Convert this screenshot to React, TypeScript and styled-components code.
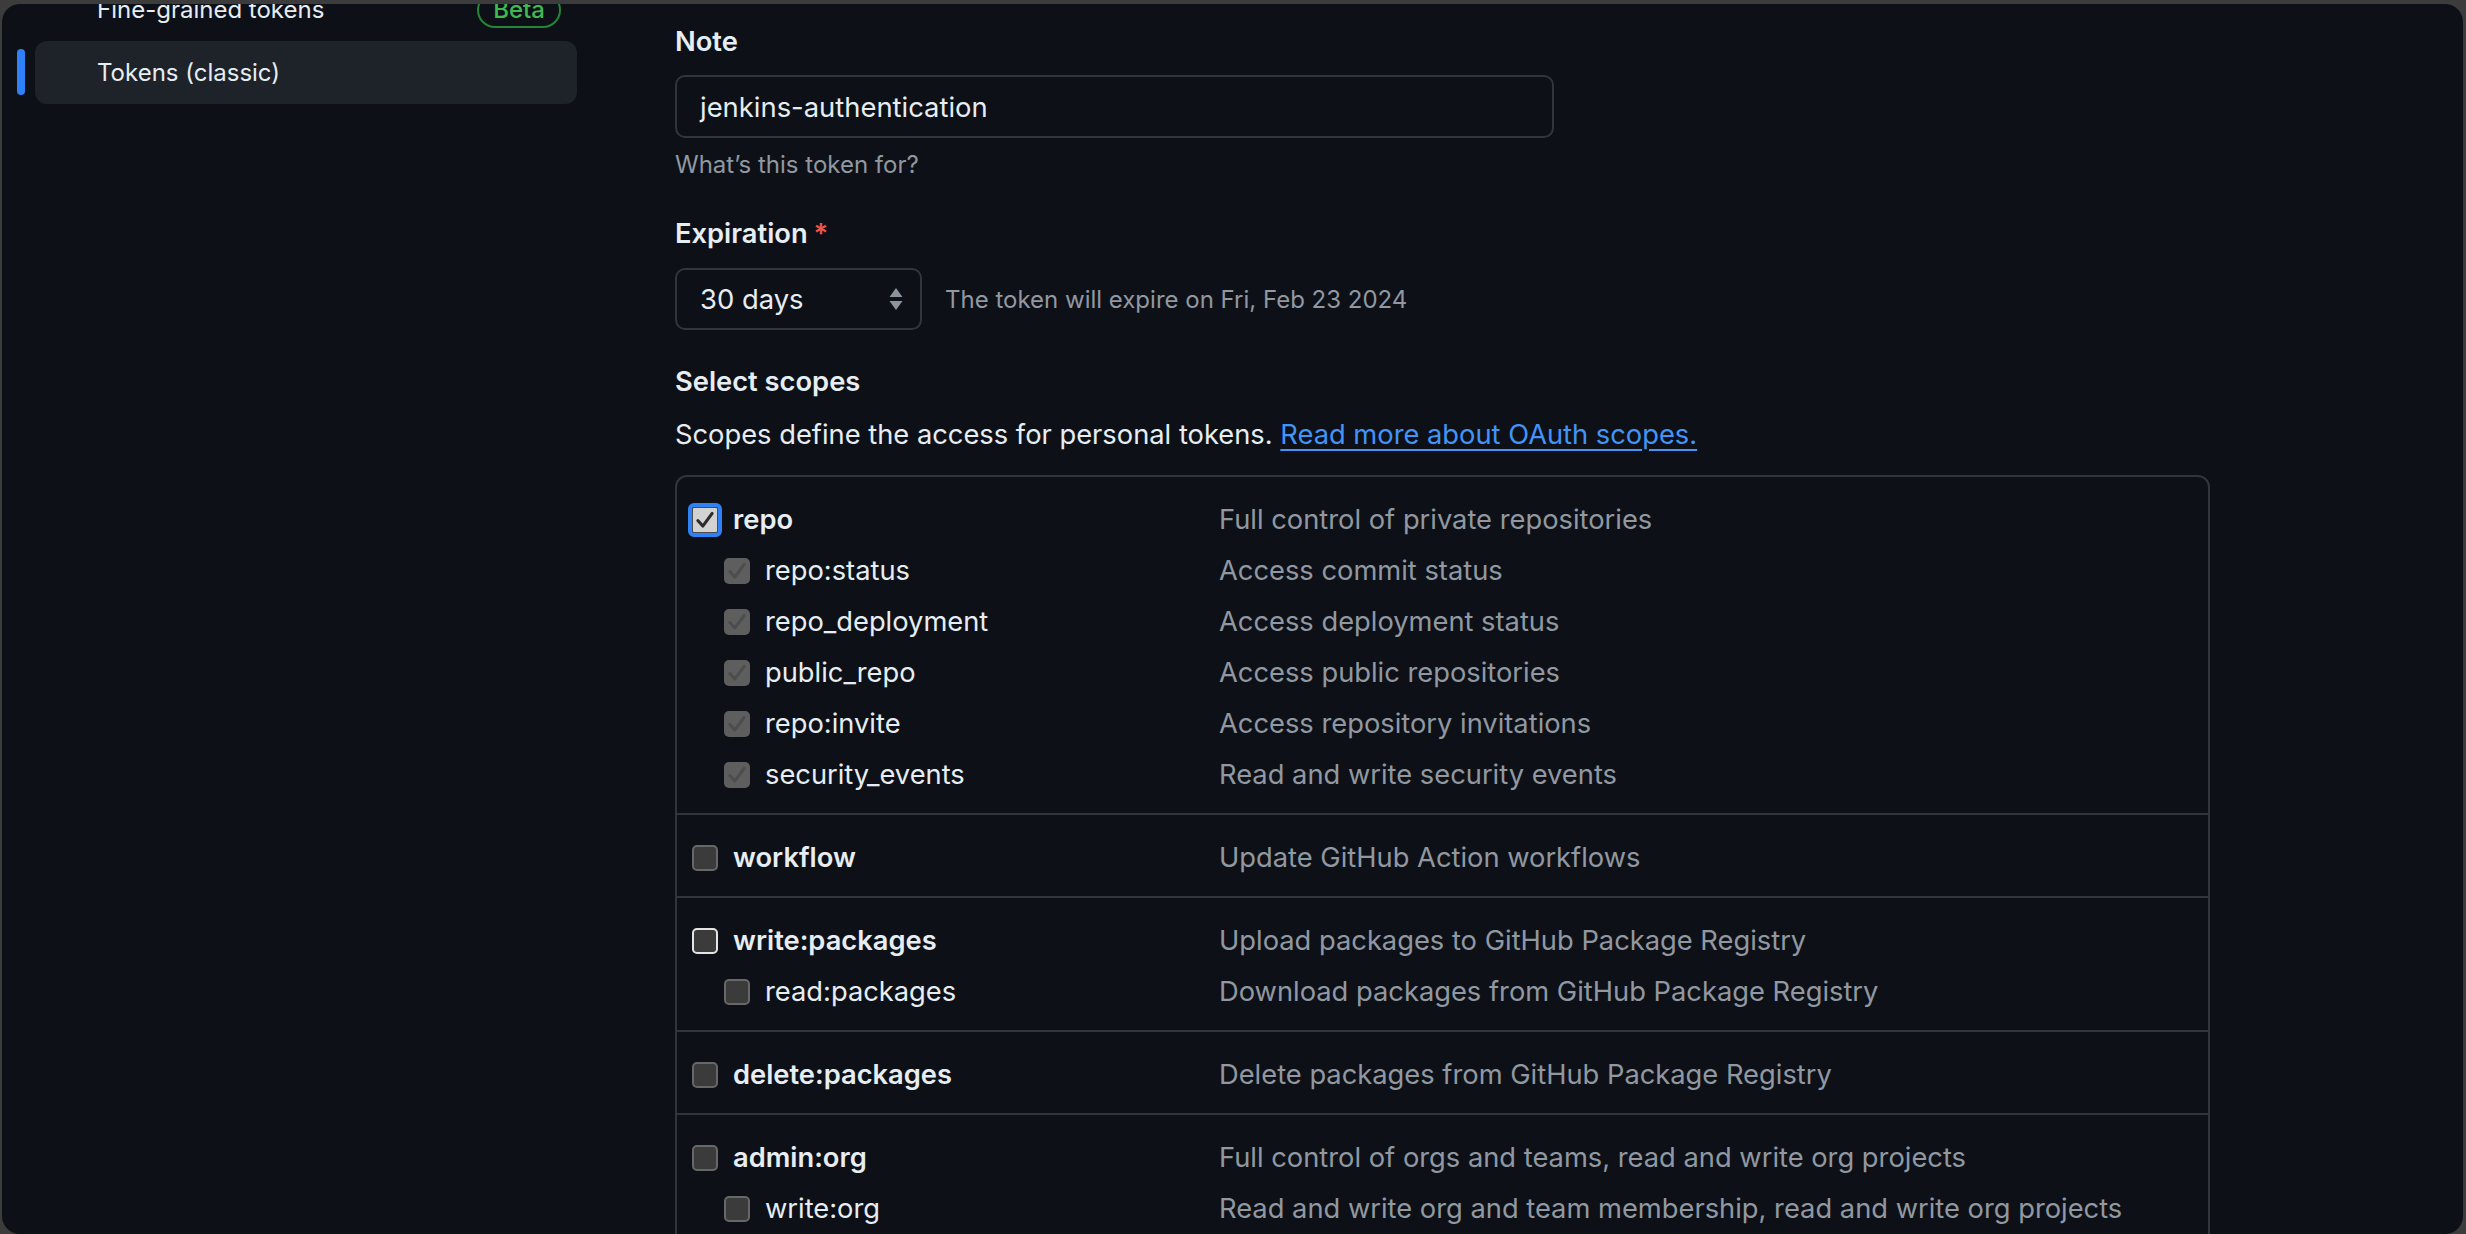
import React from "react";
import styled, { createGlobalStyle, css } from "styled-components";

const Global = createGlobalStyle`
  html, body { margin: 0; padding: 0; height: 100%; background: #3c3c3c; overflow: hidden; }
  #root { height: 100%; }
  *, *::before, *::after { box-sizing: border-box; }
`;

const FONT = `Inter, "Noto Sans", "Liberation Sans", sans-serif`;
const FG = "#e6edf3";
const MUTED = "#9198a1";
const BORDER = "#30363d";
const BODY = "27.3px";

const Window = styled.div`
  height: calc(100vh - 4px);
  margin: 4px 3px 0 2px;
  border-radius: 18px;
  background: #0d1117;
  overflow: hidden;
  display: flex;
  font-family: ${FONT};
  color: ${FG};
`;

const Sidebar = styled.nav`
  width: 673px;
  flex-shrink: 0;
  padding-left: 33px;
`;

const NavList = styled.ul`
  list-style: none;
  margin: -26px 0 0;
  padding: 0;
  width: 542px;
  display: flex;
  flex-direction: column;
`;

const NavItem = styled.li<{ $active?: boolean }>`
  position: relative;
  height: 63px;
  display: flex;
  align-items: center;
  justify-content: space-between;
  padding: 0 16px 0 62px;
  border-radius: 12px;
  font-size: 24px;
  color: ${FG};
  ${(p) =>
    p.$active &&
    css`
      background: #1e2329;
      &::before {
        content: "";
        position: absolute;
        left: -18px;
        top: 8px;
        width: 8px;
        height: 46px;
        border-radius: 6px;
        background: #2f81f7;
      }
    `}
`;

const BetaBadge = styled.span`
  display: inline-flex;
  align-items: center;
  height: 36px;
  padding: 0 14px;
  border: 2px solid #238636;
  border-radius: 999px;
  color: #3fb950;
  font-size: 24px;
  font-weight: 500;
`;

const Main = styled.main`
  flex: 1;
  padding-top: 17px;
  display: flex;
  flex-direction: column;
  align-items: flex-start;
  & > * {
    flex-shrink: 0;
  }
`;

const Label = styled.div<{ $mt?: number }>`
  font-size: ${BODY};
  font-weight: 600;
  line-height: 42px;
  margin-top: ${(p) => p.$mt ?? 0}px;
`;

const Required = styled.span`
  color: #f85149;
  margin-left: 6px;
`;

const TextInput = styled.div`
  margin-top: 12px;
  width: 879px;
  height: 63px;
  border: 2px solid ${BORDER};
  border-radius: 10px;
  padding: 0 23px;
  display: flex;
  align-items: center;
  font-size: 27.4px;
`;

const Hint = styled.div`
  margin-top: 9px;
  font-size: 24px;
  line-height: 36px;
  color: ${MUTED};
`;

const SelectRow = styled.div`
  margin-top: 13px;
  display: flex;
  align-items: center;
  gap: 23px;
`;

const Select = styled.div`
  width: 247px;
  height: 62px;
  border: 2px solid ${BORDER};
  border-radius: 10px;
  padding: 0 17px 0 23px;
  display: flex;
  align-items: center;
  justify-content: space-between;
  font-size: 27.4px;
`;

const ExpireNote = styled.span`
  font-size: 24px;
  color: ${MUTED};
`;

const Paragraph = styled.p`
  margin: 11px 0 0;
  font-size: ${BODY};
  line-height: 42px;
`;

const Link = styled.a`
  color: #4493f8;
  text-decoration: underline;
  text-underline-offset: 5px;
  text-decoration-thickness: 2px;
`;

const ScopeTable = styled.div`
  margin-top: 19px;
  width: 1535px;
  border: 2px solid ${BORDER};
  border-radius: 12px;
`;

const Section = styled.div`
  padding: 17px 0 13px 15px;
  & + & {
    border-top: 2px solid ${BORDER};
  }
`;

const Row = styled.div`
  display: grid;
  grid-template-columns: 527px 1fr;
  align-items: center;
  height: 51px;
  font-size: ${BODY};
`;

const LabelCell = styled.label<{ $child?: boolean }>`
  display: flex;
  align-items: center;
  gap: 15px;
  padding-left: ${(p) => (p.$child ? 32 : 0)}px;
  font-weight: ${(p) => (p.$child ? 400 : 600)};
  color: ${FG};
`;

const Desc = styled.span`
  color: ${MUTED};
`;

type BoxState = "focused" | "disabled" | "off" | "hover";

const Box = styled.span<{ $state: BoxState }>`
  width: 26px;
  height: 26px;
  flex-shrink: 0;
  display: inline-flex;
  align-items: center;
  justify-content: center;
  border-radius: 5px;
  ${(p) =>
    p.$state === "focused"
      ? css`
          background: #d2d2d2;
          border: 1px solid #4a4a4a;
          border-radius: 2px;
          outline: 4px solid #2f81f7;
        `
      : p.$state === "disabled"
      ? css`
          background: #5e5e5e;
        `
      : p.$state === "hover"
      ? css`
          background: #3b3b3b;
          border: 2px solid #e4e4e4;
        `
      : css`
          background: #3b3b3b;
          border: 2px solid #676767;
        `}
`;

const Check = ({ color }: { color: string }) => (
  <svg width="22" height="22" viewBox="0 0 20 20" aria-hidden="true">
    <path d="M3.5 10.5 L8 15.5 L16.5 4" fill="none" stroke={color} strokeWidth="2.8" strokeLinecap="round" strokeLinejoin="round" />
  </svg>
);

const SelectArrows = () => (
  <svg width="14" height="24" viewBox="0 0 14 24" aria-hidden="true">
    <path d="M7 1 L13.5 10 L0.5 10 Z" fill="#8b939c" />
    <path d="M7 23 L13.5 14 L0.5 14 Z" fill="#8b939c" />
  </svg>
);

type Scope = { name: string; desc: string; child?: boolean; state: BoxState };

const sections: Scope[][] = [
  [
    { name: "repo", desc: "Full control of private repositories", state: "focused" },
    { name: "repo:status", desc: "Access commit status", child: true, state: "disabled" },
    { name: "repo_deployment", desc: "Access deployment status", child: true, state: "disabled" },
    { name: "public_repo", desc: "Access public repositories", child: true, state: "disabled" },
    { name: "repo:invite", desc: "Access repository invitations", child: true, state: "disabled" },
    { name: "security_events", desc: "Read and write security events", child: true, state: "disabled" },
  ],
  [{ name: "workflow", desc: "Update GitHub Action workflows", state: "off" }],
  [
    { name: "write:packages", desc: "Upload packages to GitHub Package Registry", state: "hover" },
    { name: "read:packages", desc: "Download packages from GitHub Package Registry", child: true, state: "off" },
  ],
  [{ name: "delete:packages", desc: "Delete packages from GitHub Package Registry", state: "off" }],
  [
    { name: "admin:org", desc: "Full control of orgs and teams, read and write org projects", state: "off" },
    { name: "write:org", desc: "Read and write org and team membership, read and write org projects", child: true, state: "off" },
    { name: "read:org", desc: "Read org and team membership, read org projects", child: true, state: "off" },
  ],
];

export default function App() {
  return (
    <>
      <Global />
      <Window>
        <Sidebar>
          <NavList>
            <NavItem>
              <span>Fine-grained tokens</span>
              <BetaBadge>Beta</BetaBadge>
            </NavItem>
            <NavItem $active>
              <span>Tokens (classic)</span>
            </NavItem>
          </NavList>
        </Sidebar>
        <Main>
          <Label>Note</Label>
          <TextInput>jenkins-authentication</TextInput>
          <Hint>What’s this token for?</Hint>

          <Label $mt={30}>
            Expiration<Required>*</Required>
          </Label>
          <SelectRow>
            <Select>
              <span>30 days</span>
              <SelectArrows />
            </Select>
            <ExpireNote>The token will expire on Fri, Feb 23 2024</ExpireNote>
          </SelectRow>

          <Label $mt={31}>Select scopes</Label>
          <Paragraph>
            Scopes define the access for personal tokens. <Link href="#">Read more about OAuth scopes.</Link>
          </Paragraph>

          <ScopeTable>
            {sections.map((sec, i) => (
              <Section key={i}>
                {sec.map((s) => (
                  <Row key={s.name}>
                    <LabelCell $child={s.child}>
                      <Box $state={s.state}>
                        {s.state === "focused" && <Check color="#2b2b2b" />}
                        {s.state === "disabled" && <Check color="#4d4d4d" />}
                      </Box>
                      {s.name}
                    </LabelCell>
                    <Desc>{s.desc}</Desc>
                  </Row>
                ))}
              </Section>
            ))}
          </ScopeTable>
        </Main>
      </Window>
    </>
  );
}
